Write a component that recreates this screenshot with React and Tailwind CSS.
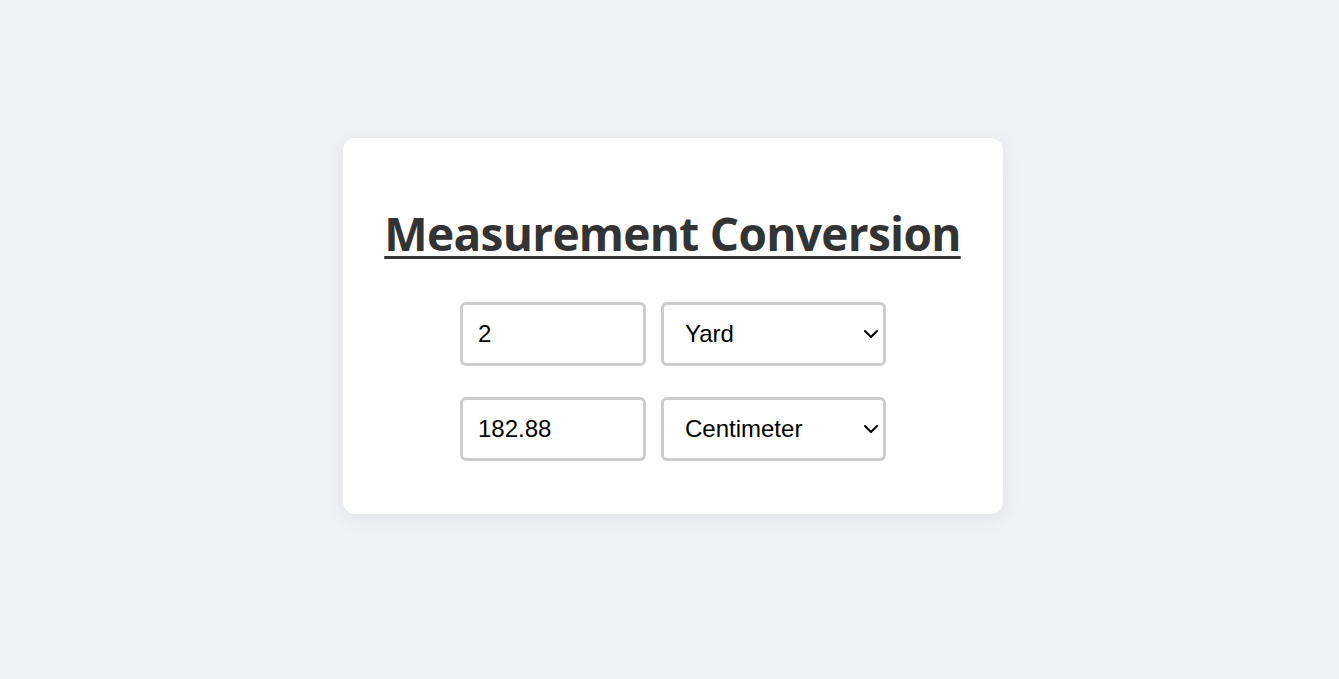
import React, { useState } from 'react';

const factors = {
  meter: 1,
  centimeter: 0.01,
  millimeter: 0.001,
  kilometer: 1000,
  inch: 0.0254,
  foot: 0.3048,
  yard: 0.9144,
  mile: 1609.344,
};

const units = [
  ['meter', 'Meter'],
  ['centimeter', 'Centimeter'],
  ['millimeter', 'Millimeter'],
  ['kilometer', 'Kilometer'],
  ['inch', 'Inch'],
  ['foot', 'Foot'],
  ['yard', 'Yard'],
  ['mile', 'Mile'],
];

const fieldCls =
  "h-[64px] border-[3px] border-[#ccc] rounded-[6px] bg-white text-[24px] text-black outline-none font-['Liberation_Sans',Arial,sans-serif]";

function UnitSelect({ value, onChange }) {
  return (
    <div className="relative">
      <select
        value={value}
        onChange={(e) => onChange(e.target.value)}
        className={`${fieldCls} w-[225px] pl-[21px] pr-[24px] appearance-none`}
      >
        {units.map(([k, l]) => (
          <option key={k} value={k}>{l}</option>
        ))}
      </select>
      <svg
        className="absolute right-[7px] top-1/2 -translate-y-1/2 pointer-events-none"
        width="16"
        height="10"
        viewBox="0 0 16 10"
        fill="none"
      >
        <path d="M2 2 L8 8 L14 2" stroke="#000" strokeWidth="2" strokeLinecap="round" strokeLinejoin="round" />
      </svg>
    </div>
  );
}

export default function App() {
  const [value, setValue] = useState('2');
  const [from, setFrom] = useState('yard');
  const [to, setTo] = useState('centimeter');

  const num = parseFloat(value);
  const result = isNaN(num) ? '' : String(parseFloat(((num * factors[from]) / factors[to]).toFixed(6)));

  return (
    <div className="min-h-screen bg-[#f0f2f5] flex justify-center pt-[138px] pl-[6px]">
      <div className="w-[660px] h-[376px] bg-white rounded-[12px] shadow-[0_4px_20px_rgba(0,0,0,0.08)] flex flex-col items-center pt-[63px]">
        <h1 className="text-[46px] leading-[64px] font-bold text-[#333] underline decoration-[3px] underline-offset-[5px] tracking-[-0.7px] font-['Open_Sans','Noto_Sans',sans-serif]">
          Measurement Conversion
        </h1>

        <div className="mt-[37px] flex flex-col gap-[31px] pl-[1px]">
          <div className="flex gap-[15px]">
            <input
              type="text"
              value={value}
              onChange={(e) => setValue(e.target.value)}
              className={`${fieldCls} w-[186px] pl-[15px]`}
            />
            <UnitSelect value={from} onChange={setFrom} />
          </div>
          <div className="flex gap-[15px]">
            <input type="text" readOnly value={result} className={`${fieldCls} w-[186px] pl-[15px]`} />
            <UnitSelect value={to} onChange={setTo} />
          </div>
        </div>
      </div>
    </div>
  );
}
